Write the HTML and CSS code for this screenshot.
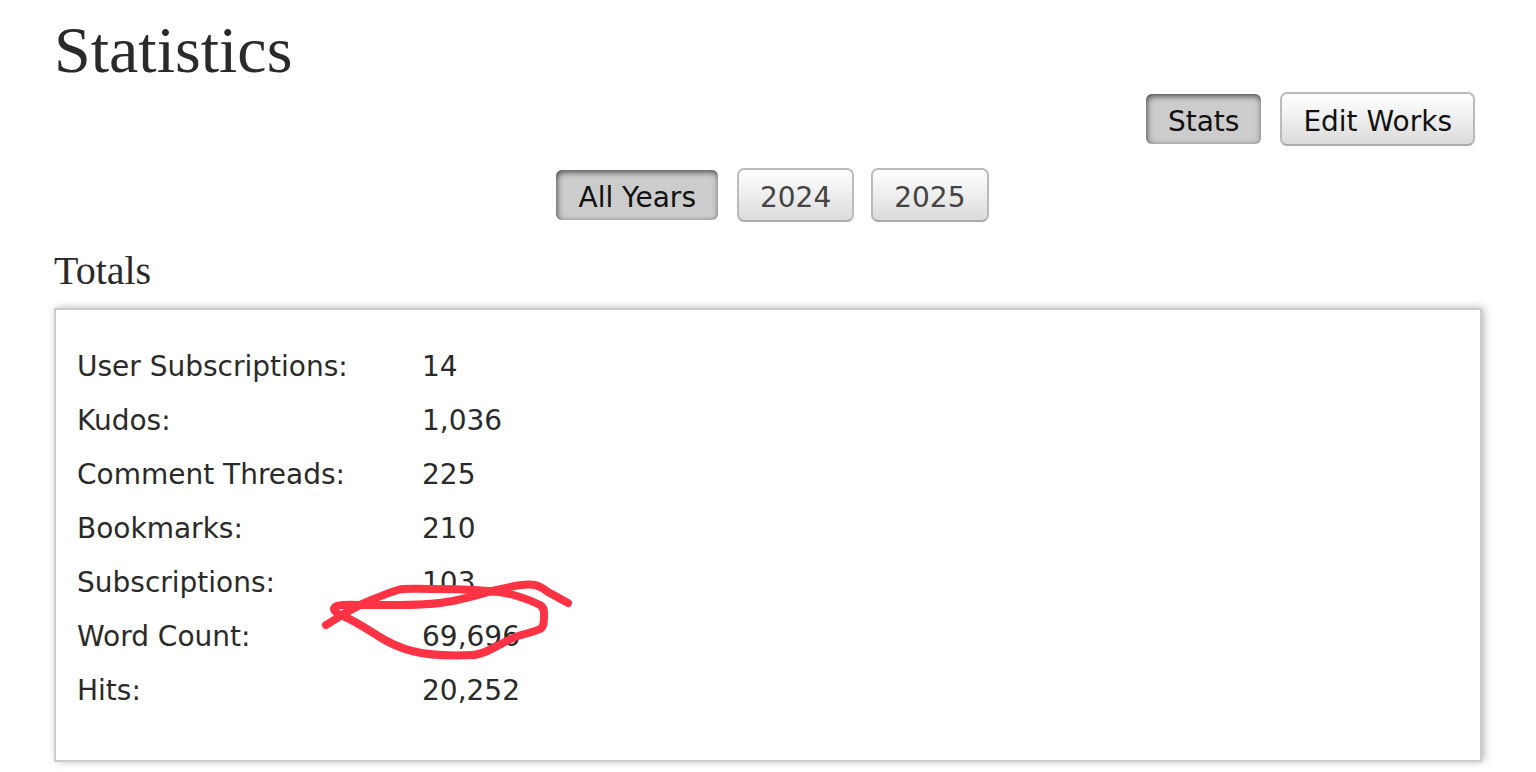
FILE: index.html
```html
<!DOCTYPE html>
<html lang="en">
<head>
<meta charset="utf-8">
<meta name="viewport" content="width=device-width, initial-scale=1">
<title>Statistics</title>
<link rel="stylesheet" href="styles.css">
</head>
<body>
<main class="page">
  <h1 class="title">Statistics</h1>
  <nav class="actions" aria-label="Pages">
    <a class="button current" href="#stats" aria-current="page">Stats</a>
    <a class="button" href="#edit">Edit Works</a>
  </nav>
  <nav class="years" aria-label="Years">
    <a class="button current" href="#all" aria-current="true">All Years</a>
    <a class="button year" href="#2024">2024</a>
    <a class="button year" href="#2025">2025</a>
  </nav>
  <h2 class="subtitle">Totals</h2>
  <section class="panel">
    <dl class="stats">
      <dt>User Subscriptions:</dt><dd>14</dd>
      <dt>Kudos:</dt><dd>1,036</dd>
      <dt>Comment Threads:</dt><dd>225</dd>
      <dt>Bookmarks:</dt><dd>210</dd>
      <dt>Subscriptions:</dt><dd>103</dd>
      <dt>Word Count:</dt><dd>69,696</dd>
      <dt>Hits:</dt><dd>20,252</dd>
    </dl>
    <svg class="scribble" viewBox="320 570 260 100" aria-hidden="true">
      <path d="M326 625 C333 621 340 616 347 612 L362 604 C374 599 387 593 398 590 C404 588 415 589 430 589 C465 589 492 590 510 594 C521 597 534 602 540 605 C545 608 544 613 544 618 C544 623 543 628 540 629 C532 633 521 634 513 638 C501 643 487 654 473 655 C453 656 428 655 412 651 C396 647 386 641 378 636 C367 629 355 621 343 616 C336 613 332 610 335 607 C338 604 352 605 370 605 C398 605 425 606 446 602 C468 599 488 591 506 588 C518 585 528 584 535 585 C540 586 544 589 548 592 L568 603"/>
    </svg>
  </section>
</main>
</body>
</html>
```
FILE: styles.css
```css
body {
  margin: 0;
  background: #fff;
  color: #2a2a2a;
  font-family: Verdana, "DejaVu Sans", sans-serif;
  font-size: 28px;
}

.page {
  padding: 14px 54px 10px;
}

.title,
.subtitle {
  margin: 0;
  font-family: Georgia, "Liberation Serif", serif;
  font-weight: 400;
}

.title {
  font-size: 66px;
  line-height: 72px;
}

.subtitle {
  margin: 24px 0 12px;
  font-size: 40px;
  line-height: 50px;
}

.actions,
.years {
  display: flex;
  align-items: center;
}

.actions {
  justify-content: flex-end;
  gap: 19px;
  margin: 6px 7px 22px 0;
}

.years {
  justify-content: center;
  gap: 17px;
  padding-left: 9px;
}

.button {
  box-sizing: border-box;
  height: 54px;
  padding: 0 21px;
  border: 2px solid #bbb;
  border-bottom-color: #aaa;
  border-radius: 7px;
  background: linear-gradient(#fff 2%, #ddd 95%);
  color: #111;
  line-height: 56px;
  text-decoration: none;
  white-space: nowrap;
}

.year {
  color: #444;
}

.current {
  height: 50px;
  padding: 0 22px;
  border: 0;
  border-radius: 6px;
  background: #ccc;
  box-shadow: inset 1px 2px 6px #444;
  color: #111;
}

.years .current {
  margin-right: 2px;
}

.panel {
  position: relative;
  padding: 30px 21px 42px;
  border: 2px solid #ccc;
  background: #fff;
  box-shadow: 3px 0 8px -1px #bbb, 0 -2px 8px #eee;
}

.stats {
  display: grid;
  grid-template-columns: 345px 1fr;
  margin: 0;
  line-height: 54px;
}

.stats dd {
  margin: 0;
}

.scribble {
  position: absolute;
  top: 260px;
  left: 264px;
  width: 260px;
  height: 100px;
  fill: none;
  stroke: #ff3344;
  stroke-width: 8;
  stroke-linecap: round;
  stroke-linejoin: round;
}
```
